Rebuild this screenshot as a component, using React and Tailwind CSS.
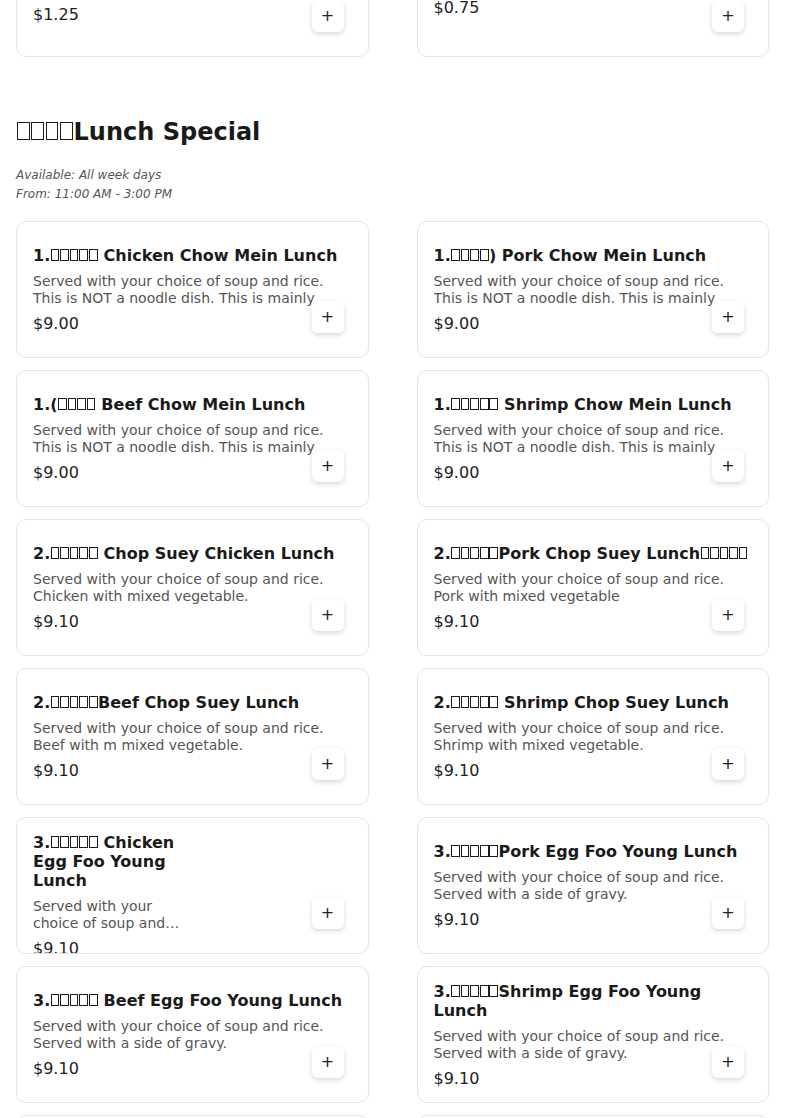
import React from "react";

function Tofu({ n }) {
  return (
    <>
      {Array.from({ length: n }).map((_, i) => (
        <span
          key={i}
          className="mx-[0.03em] inline-block h-[0.74em] w-[0.54em] border border-current"
        />
      ))}
    </>
  );
}

const SERVED = "Served with your choice of soup and rice.";
const NOODLE = SERVED + " This is NOT a noodle dish. This is mainly";
const GRAVY = SERVED + " Served with a side of gravy.";

const items = [
  { title: <>1.<Tofu n={5} /> Chicken Chow Mein Lunch</>, desc: NOODLE, price: "$9.00" },
  { title: <>1.<Tofu n={4} />) Pork Chow Mein Lunch</>, desc: NOODLE, price: "$9.00" },
  { title: <>1.(<Tofu n={4} /> Beef Chow Mein Lunch</>, desc: NOODLE, price: "$9.00" },
  { title: <>1.<Tofu n={5} /> Shrimp Chow Mein Lunch</>, desc: NOODLE, price: "$9.00" },
  { title: <>2.<Tofu n={5} /> Chop Suey Chicken Lunch</>, desc: SERVED + " Chicken with mixed vegetable.", price: "$9.10" },
  { title: <>2.<Tofu n={5} />Pork Chop Suey Lunch<Tofu n={5} /></>, desc: SERVED + " Pork with mixed vegetable", price: "$9.10" },
  { title: <>2.<Tofu n={5} />Beef Chop Suey Lunch</>, desc: SERVED + " Beef with m mixed vegetable.", price: "$9.10" },
  { title: <>2.<Tofu n={5} /> Shrimp Chop Suey Lunch</>, desc: SERVED + " Shrimp with mixed vegetable.", price: "$9.10" },
  { title: <>3.<Tofu n={5} /> Chicken Egg Foo Young Lunch</>, desc: GRAVY, price: "$9.10", narrow: true },
  { title: <>3.<Tofu n={5} />Pork Egg Foo Young Lunch</>, desc: GRAVY, price: "$9.10" },
  { title: <>3.<Tofu n={5} /> Beef Egg Foo Young Lunch</>, desc: GRAVY, price: "$9.10" },
  { title: <>3.<Tofu n={5} />Shrimp Egg Foo Young Lunch</>, desc: GRAVY, price: "$9.10" },
  { title: <>4.<Tofu n={5} /> Chicken Lo Mein Lunch</>, desc: SERVED, price: "$9.10" },
  { title: <>4.<Tofu n={5} /> Pork Lo Mein Lunch</>, desc: SERVED, price: "$9.10" },
];

function AddButton() {
  return (
    <button className="absolute right-6 bottom-6 flex h-8 w-8 items-center justify-center rounded-md bg-white text-[16px] leading-none text-[#222] shadow-[0_2px_5px_rgba(0,0,0,0.16)]">
      +
    </button>
  );
}

function Card({ item }) {
  return (
    <div className="relative flex h-[137px] flex-col overflow-hidden rounded-[10px] border border-[#e4e4e4] bg-white px-4 py-[15px]">
      <div className={`my-auto ${item.narrow ? "w-[155px]" : ""}`}>
        <div className="text-[16px] font-bold leading-[19px] text-[#1a1a1a]">{item.title}</div>
        {item.desc ? (
          <div className="mt-2 line-clamp-2 text-[14px] leading-[17px] text-[#555]">{item.desc}</div>
        ) : null}
        <div className={`${item.priceMt || "mt-[7px]"} text-[16px] leading-[19px] text-[#222]`}>{item.price}</div>
      </div>
      <AddButton />
    </div>
  );
}

export default function App() {
  return (
    <div className="min-h-[1118px] overflow-hidden bg-white px-4 font-['DejaVu_Sans',sans-serif]">
      <div className="-mt-[80px] grid grid-cols-2 gap-x-12 gap-y-3">
        <Card item={{ title: "Egg Roll", desc: "Pork and vegetable.", price: "$1.25", priceMt: "mt-[7px]" }} />
        <Card item={{ title: "Extra Sauce", desc: "", price: "$0.75", priceMt: "mt-[18px]" }} />
      </div>

      <h2 className="mt-[59px] text-[24px] font-bold leading-[32px] text-[#1a1a1a]">
        <Tofu n={4} />Lunch Special
      </h2>
      <div className="mt-[18px] text-[12px] italic leading-[19px] text-[#555]">
        <div>Available: All week days</div>
        <div>From: 11:00 AM - 3:00 PM</div>
      </div>

      <div className="mt-[17px] grid grid-cols-2 gap-x-12 gap-y-3">
        {items.map((it, i) => (
          <Card key={i} item={it} />
        ))}
      </div>
    </div>
  );
}
